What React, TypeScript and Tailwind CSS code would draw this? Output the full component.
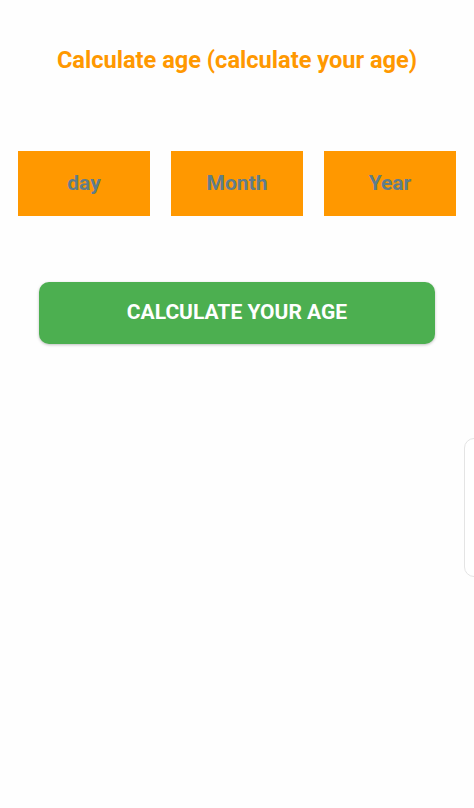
import React from 'react'

const fieldLabels = ['day', 'Month', 'Year']

export default function App() {
  return (
    <div
      className="relative w-[474px] h-[808px] overflow-hidden bg-[#fefefe]"
      style={{ fontFamily: 'Roboto, "Noto Sans", sans-serif' }}
    >
      <div className="flex flex-col items-center">
        <h1 className="mt-[44px] text-[23.6px] leading-[32px] font-bold text-[#ff9800]">
          Calculate age (calculate your age)
        </h1>

        <div className="mt-[75px] flex gap-[21px] px-[18px] w-full">
          {fieldLabels.map((label) => (
            <div
              key={label}
              className="w-[132px] h-[65px] bg-[#ff9800] flex items-center justify-center text-[21px] font-bold text-[#607d8b]"
            >
              {label}
            </div>
          ))}
        </div>

        <button className="mt-[66px] w-[396px] h-[62px] rounded-[10px] bg-[#4caf50] text-white text-[21px] font-bold uppercase shadow-[0_1px_3px_rgba(0,0,0,0.25)]">
          Calculate your age
        </button>
      </div>

      {/* edge panel handle */}
      <div className="absolute left-[464px] top-[438px] w-[20px] h-[139px] rounded-l-[10px] border border-[#e4e4e4] bg-white" />
    </div>
  )
}
